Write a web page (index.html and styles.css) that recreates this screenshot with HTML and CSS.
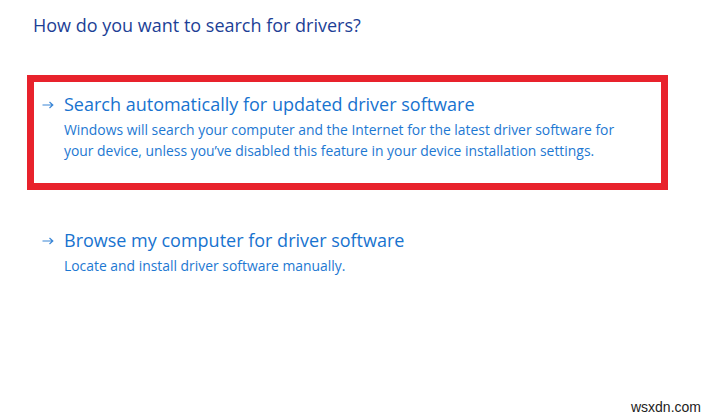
FILE: index.html
```html
<!DOCTYPE html>
<html lang="en">
<head>
  <meta charset="UTF-8" />
  <title>Update Drivers</title>
  <link rel="stylesheet" href="styles.css">
</head>
<body>
  <div class="wizard">
    <h1>How do you want to search for drivers?</h1>

    <div class="option option-marked">
      <div class="option-title">
        <svg class="arrow" width="12" height="8" viewBox="0 0 12 8"><path d="M0.5 4H10.5M7.5 1L10.8 4L7.5 7" fill="none" stroke="currentColor" stroke-width="1.2"/></svg>
        Search automatically for updated driver software
      </div>
      <p class="option-desc">Windows will search your computer and the Internet for the latest driver software for<br>your device, unless you&#8217;ve disabled this feature in your device installation settings.</p>
    </div>

    <div class="option">
      <div class="option-title">
        <svg class="arrow" width="12" height="8" viewBox="0 0 12 8"><path d="M0.5 4H10.5M7.5 1L10.8 4L7.5 7" fill="none" stroke="currentColor" stroke-width="1.2"/></svg>
        Browse my computer for driver software
      </div>
      <p class="option-desc">Locate and install driver software manually.</p>
    </div>
  </div>

  <div class="watermark">wsxdn.com</div>
</body>
</html>
```

FILE: styles.css
```css
body {
  margin: 0;
  background: #fff;
  font-family: 'Open Sans', 'Noto Sans', sans-serif;
  height: 418px;
  position: relative;
  overflow: hidden;
}

.wizard {
  padding: 11px 45px 0 27px;
}

h1 {
  margin: 0 0 36px 6px;
  font-size: 18px;
  line-height: 28px;
  font-weight: normal;
  color: #1d3f96;
}

.option {
  border: 7px solid transparent;
  padding: 10px 8px 22px 8px;
  color: #1873cf;
}

.option-marked {
  border-color: #e8222c;
  margin-bottom: 21px;
}

.option-title {
  display: flex;
  align-items: center;
  font-size: 18px;
  line-height: 24px;
}

.arrow {
  flex: none;
  margin: 1px 10px 0 0;
  color: #3a86d6;
}

.option-desc {
  margin: 3px 0 0 22px;
  font-size: 13.9px;
  line-height: 21px;
  color: #1d78d2;
}

.watermark {
  position: absolute;
  right: 12px;
  bottom: 3px;
  font-family: 'Liberation Sans', Arial, sans-serif;
  font-size: 14px;
  color: #222;
}
```
